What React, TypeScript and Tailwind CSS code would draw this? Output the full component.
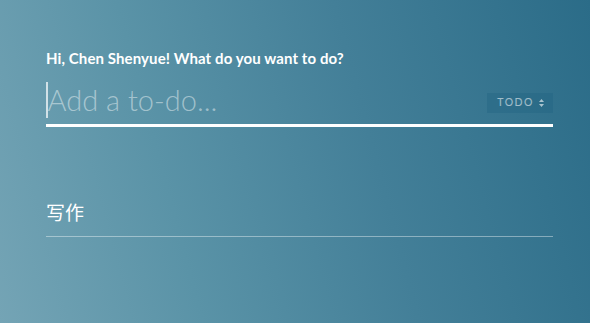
import React from "react";

export default function App() {
  return (
    <div
      className="w-[590px] h-[323px] overflow-hidden bg-[linear-gradient(75deg,#74a4b5_0%,#5a93a7_30%,#437f98_62%,#2b6c88_100%)] text-white"
      style={{ fontFamily: "Lato, 'Noto Sans CJK SC', sans-serif" }}
    >
      <div className="pl-[46px] pr-[37px] pt-[47px]">
        <h1 className="text-[15px] font-bold leading-[22px] tracking-[0.1px] text-white">
          Hi, Chen Shenyue! What do you want to do?
        </h1>
        <div className="mt-[13px] flex items-center border-b-[3px] border-white pb-[6px]">
          <div className="flex flex-1 items-center">
            <span className="h-[36px] w-[1.5px] bg-white/70" />
            <span className="text-[29px] font-light leading-[36px] text-white/45">
              Add a to-do...
            </span>
          </div>
          <div className="mt-[6px] flex h-[20px] items-center gap-[5px] bg-[#1f6080]/35 pl-[10px] pr-[9px] text-[10.5px] tracking-[1.5px] text-white/55">
            TODO
            <svg width="5" height="8" viewBox="0 0 5 8" className="fill-white/60">
              <path d="M2.5 0 L5 3 H0 Z" />
              <path d="M2.5 8 L5 5 H0 Z" />
            </svg>
          </div>
        </div>
        <div className="mt-[72px] border-b border-white/40 pb-[10px]">
          <span className="text-[19px] leading-[26px] text-white" style={{ fontFamily: "'Noto Sans CJK SC', sans-serif" }}>
            写作
          </span>
        </div>
      </div>
    </div>
  );
}
